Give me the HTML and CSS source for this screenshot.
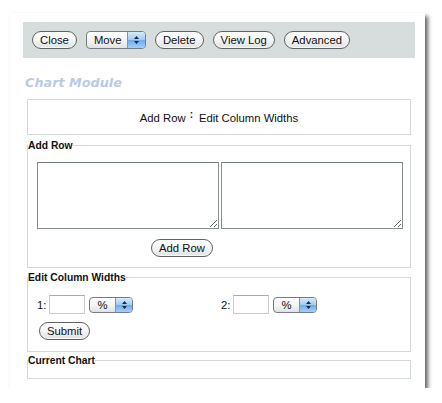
FILE: index.html
```html
<!DOCTYPE html>
<html>
<head>
<meta charset="utf-8">
<link rel="stylesheet" href="styles.css">
</head>
<body>
<div class="card">
  <div class="toolbar">
    <button class="btn">Close</button>
    <div class="select select-move">
      <span class="select-label">Move</span>
      <span class="stepper"><svg width="7" height="10" viewBox="0 0 7 10"><path d="M3.5 1 L6 4 L1 4 Z M1 6 L6 6 L3.5 9 Z" fill="#1d2a44"/></svg></span>
    </div>
    <button class="btn">Delete</button>
    <button class="btn">View Log</button>
    <button class="btn">Advanced</button>
  </div>
  <div class="content">
    <h1 class="title">Chart Module</h1>
    <div class="nav">Add Row<span class="sep">:</span>Edit Column Widths</div>
    <fieldset class="group group-add">
      <legend>Add Row</legend>
      <div class="textareas">
        <textarea class="cell"></textarea>
        <textarea class="cell"></textarea>
      </div>
      <div class="add-actions"><button class="btn">Add Row</button></div>
    </fieldset>
    <fieldset class="group group-widths">
      <legend>Edit Column Widths</legend>
      <div class="width-row">
        <div class="width-col">
          <label class="width-label">1:</label>
          <input class="width-input" type="text">
          <div class="select select-unit">
            <span class="select-label">%</span>
            <span class="stepper"><svg width="7" height="10" viewBox="0 0 7 10"><path d="M3.5 1 L6 4 L1 4 Z M1 6 L6 6 L3.5 9 Z" fill="#1d2a44"/></svg></span>
          </div>
        </div>
        <div class="width-col">
          <label class="width-label">2:</label>
          <input class="width-input" type="text">
          <div class="select select-unit">
            <span class="select-label">%</span>
            <span class="stepper"><svg width="7" height="10" viewBox="0 0 7 10"><path d="M3.5 1 L6 4 L1 4 Z M1 6 L6 6 L3.5 9 Z" fill="#1d2a44"/></svg></span>
          </div>
        </div>
      </div>
      <div class="submit-row"><button class="btn">Submit</button></div>
    </fieldset>
    <fieldset class="group group-chart">
      <legend>Current Chart</legend>
    </fieldset>
  </div>
</div>
</body>
</html>
```
FILE: styles.css
```css
html, body {
  margin: 0;
  padding: 0;
  background: #ffffff;
}

body {
  font-family: "Liberation Sans", Arial, sans-serif;
  font-size: 11px;
  color: #111;
}

.card {
  margin: 13px 0 0 10px;
  width: 415px;
  height: 375px;
  box-sizing: border-box;
  padding: 9px 10px 0 13px;
  background: #fff;
  box-shadow: 3px 3px 4px rgba(0, 0, 0, 0.6);
}

.toolbar {
  height: 36px;
  background: #d7dddc;
  display: flex;
  align-items: center;
  gap: 9px;
  padding-left: 9px;
}

.btn {
  height: 18px;
  box-sizing: border-box;
  margin: 0;
  padding: 0 7px;
  border: 1px solid #5e6263;
  border-radius: 9px;
  background: linear-gradient(#ffffff 0%, #f6f7f7 45%, #dfe2e2 100%);
  font-family: "Liberation Sans", Arial, sans-serif;
  font-size: 11.3px;
  line-height: 16px;
  color: #111;
  box-shadow: inset 0 -1px 1px rgba(255, 255, 255, 0.8);
}

.select {
  display: flex;
  align-items: stretch;
  box-sizing: border-box;
  border: 1px solid #777d80;
  border-radius: 4px;
  background: linear-gradient(#ffffff 0%, #f4f5f5 50%, #e1e3e3 100%);
  overflow: hidden;
}

.select-label {
  flex: 1;
  font-size: 11.3px;
  color: #111;
}

.stepper {
  display: flex;
  align-items: center;
  justify-content: center;
  background: linear-gradient(#d6ebfc 0%, #9ccbf3 50%, #6eaaea 51%, #a3d0f7 100%);
  border-left: 1px solid #7797bb;
}

.select-move {
  width: 60px;
  height: 18px;
}

.select-move .select-label {
  padding-left: 7px;
  line-height: 16px;
}

.select-move .stepper {
  width: 17px;
}

.select-unit {
  width: 44px;
  height: 16px;
}

.select-unit .select-label {
  padding-left: 7px;
  line-height: 14px;
}

.select-unit .stepper {
  width: 16px;
}

.content {
  padding: 0 4px;
}

.title {
  margin: 17px 0 0 -2px;
  font-family: "DejaVu Sans", Verdana, sans-serif;
  font-size: 12.8px;
  font-weight: bold;
  font-style: italic;
  line-height: 16px;
  color: #b8cce6;
}

.nav {
  margin-top: 8px;
  height: 36px;
  box-sizing: border-box;
  border: 1px solid #d3d8d8;
  padding-top: 3px;
  line-height: 31px;
  text-align: center;
  font-size: 11.3px;
  color: #111;
}

.sep {
  display: inline-block;
  font-size: 10px;
  font-weight: bold;
  line-height: 8px;
  vertical-align: 4px;
  margin: 0 6px 0 4px;
}

.group {
  margin: 0;
  padding: 0;
  min-width: 0;
  border: 1px solid #d3d8d8;
}

.group legend {
  padding: 2px 0 0;
  margin: 0;
  font-family: "Liberation Sans", Arial, sans-serif;
  font-size: 10.3px;
  font-weight: bold;
  line-height: 12px;
  color: #111;
}

.group-add {
  margin-top: 3px;
  padding-bottom: 10px;
}

.textareas {
  display: flex;
  gap: 2px;
  margin: 10px 0 0 9px;
}

.cell {
  width: 182px;
  height: 67px;
  box-sizing: border-box;
  margin: 0;
  padding: 2px;
  border: 1px solid #868d8f;
  border-top-color: #727a7c;
  background: #fff;
}

.add-actions {
  display: flex;
  margin-top: 10px;
  padding-left: 123px;
}

.group-widths {
  margin-top: 2px;
  padding-bottom: 11px;
}

.width-row {
  display: grid;
  grid-template-columns: 184px auto;
  margin: 11px 0 0 9px;
}

.width-col {
  display: flex;
  align-items: center;
  height: 19px;
}

.width-label {
  font-size: 11.3px;
  margin-right: 3px;
}

.width-input {
  width: 36px;
  height: 19px;
  box-sizing: border-box;
  margin: 0 4px 0 0;
  padding: 1px;
  border: 1px solid #c7cbcb;
  border-top-color: #a6abab;
  background: #fff;
}

.submit-row {
  display: flex;
  margin: 8px 0 0 11px;
}

.group-chart {
  margin-top: 1px;
  padding-bottom: 11px;
}
```
